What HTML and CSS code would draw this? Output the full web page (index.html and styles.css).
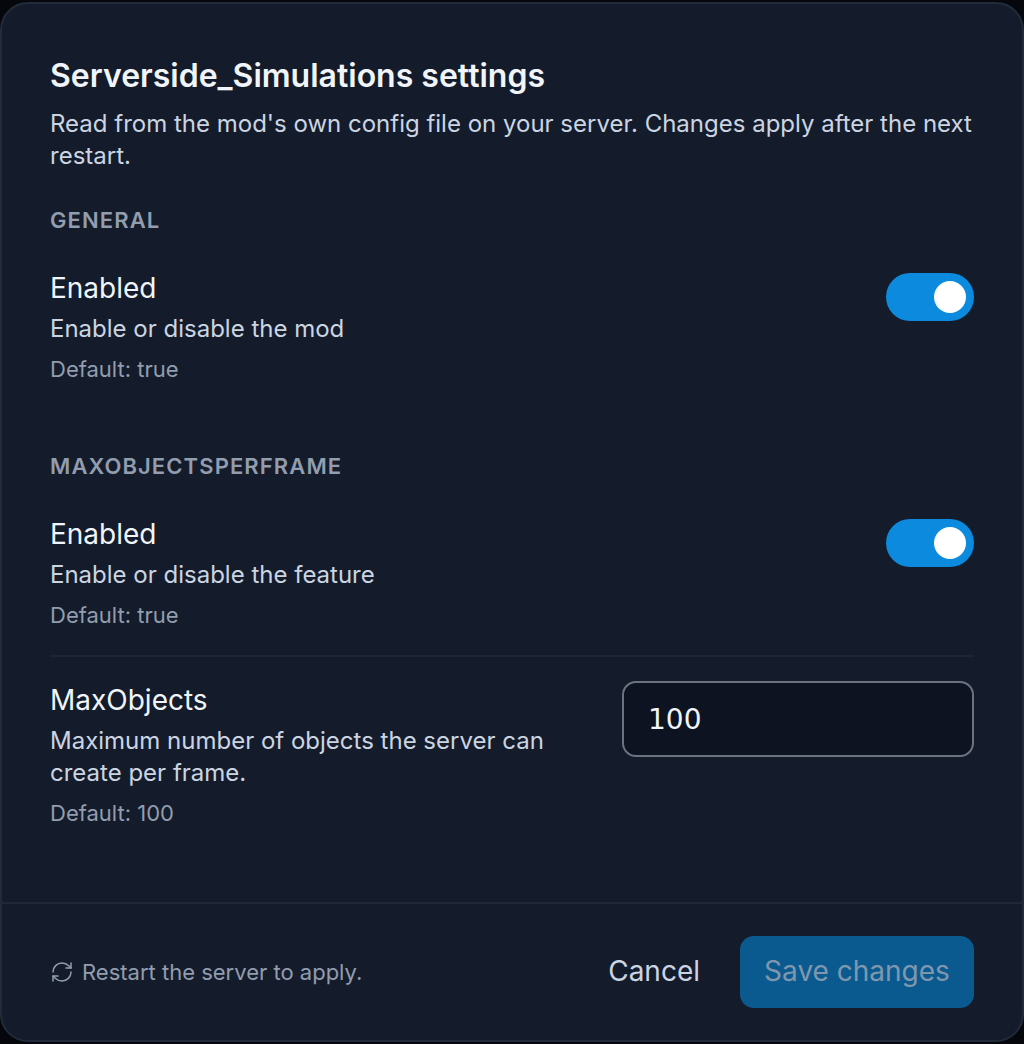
FILE: index.html
```html
<!DOCTYPE html>
<html lang="en">
<head>
    <meta charset="UTF-8">
    <meta name="viewport" content="width=device-width, initial-scale=1.0">
    <title>Serverside_Simulations settings</title>
    <link rel="stylesheet" href="styles.css">
</head>
<body>
    <div class="dialog">
        <div class="dialog-body">
            <h1>Serverside_Simulations settings</h1>
            <p class="intro">Read from the mod's own config file on your server. Changes apply after the next restart.</p>

            <section class="group">
                <h2>GENERAL</h2>
                <div class="setting">
                    <div class="setting-text">
                        <div class="setting-name">Enabled</div>
                        <div class="setting-desc">Enable or disable the mod</div>
                        <div class="setting-default">Default: true</div>
                    </div>
                    <div class="toggle"><span class="knob"></span></div>
                </div>
            </section>

            <section class="group">
                <h2>MAXOBJECTSPERFRAME</h2>
                <div class="setting">
                    <div class="setting-text">
                        <div class="setting-name">Enabled</div>
                        <div class="setting-desc">Enable or disable the feature</div>
                        <div class="setting-default">Default: true</div>
                    </div>
                    <div class="toggle"><span class="knob"></span></div>
                </div>
                <div class="setting setting-divided">
                    <div class="setting-text setting-text-narrow">
                        <div class="setting-name">MaxObjects</div>
                        <div class="setting-desc">Maximum number of objects the server can create per frame.</div>
                        <div class="setting-default">Default: 100</div>
                    </div>
                    <input class="number-input" type="text" value="100">
                </div>
            </section>
        </div>

        <div class="dialog-footer">
            <div class="restart-note">
                <svg class="restart-icon" viewBox="0 0 24 24" fill="none" stroke="currentColor" stroke-width="1.5" stroke-linecap="round" stroke-linejoin="round">
                    <path d="M3 12a9 9 0 0 1 9-9 9.75 9.75 0 0 1 6.74 2.74L21 8"/>
                    <path d="M21 3v5h-5"/>
                    <path d="M21 12a9 9 0 0 1-9 9 9.75 9.75 0 0 1-6.74-2.74L3 16"/>
                    <path d="M8 16H3v5"/>
                </svg>
                <span>Restart the server to apply.</span>
            </div>
            <div class="footer-actions">
                <button class="cancel-btn">Cancel</button>
                <button class="save-btn">Save changes</button>
            </div>
        </div>
    </div>
</body>
</html>
```

FILE: styles.css
```css
html, body {
    height: 100%;
}
body {
    margin: 0;
    padding: 2px 0;
    box-sizing: border-box;
    background-color: #05070c;
    font-family: Inter, "Liberation Sans", sans-serif;
}
.dialog {
    box-sizing: border-box;
    height: 1040px;
    display: flex;
    flex-direction: column;
    background-color: #141c2c;
    border: 2px solid #222b3a;
    border-radius: 28px;
}
.dialog-body {
    flex: 1;
    padding: 52px 48px 0;
}
h1 {
    margin: 0;
    font-size: 32px;
    line-height: 40px;
    font-weight: 600;
    color: #f1f5f9;
}
.intro {
    margin: 12px 0 0;
    font-size: 24px;
    line-height: 32px;
    color: #cbd5e1;
}
.group {
    margin-bottom: 67.5px;
}
h2 {
    margin: 34px 0 0;
    font-size: 22px;
    line-height: 28px;
    font-weight: 600;
    letter-spacing: 1.1px;
    color: #929dae;
}
.setting {
    display: flex;
    justify-content: space-between;
    align-items: flex-start;
    margin-top: 35px;
}
.setting-divided {
    margin-top: 24.5px;
    padding-top: 24px;
    border-top: 2px solid #1c2534;
}
.setting-text-narrow {
    width: 520px;
}
.setting-name {
    font-size: 28px;
    line-height: 38px;
    font-weight: 400;
    color: #f1f5f9;
}
.setting-desc {
    margin-top: 5.5px;
    font-size: 24px;
    line-height: 32px;
    color: #cbd5e1;
}
.setting-default {
    margin-top: 8px;
    font-size: 22px;
    line-height: 32px;
    color: #929dae;
}
.toggle {
    display: flex;
    justify-content: flex-end;
    align-items: center;
    width: 88px;
    height: 48px;
    margin-top: 4px;
    padding: 0 8px;
    box-sizing: border-box;
    background-color: #0c8ade;
    border-radius: 24px;
}
.knob {
    width: 32px;
    height: 32px;
    background-color: white;
    border-radius: 50%;
}
.number-input {
    box-sizing: border-box;
    width: 352px;
    height: 76px;
    padding: 0 24px;
    background-color: #0d1321;
    border: 2px solid #6b7380;
    border-radius: 14px;
    font-family: "DejaVu Sans", sans-serif;
    font-size: 28px;
    color: #f1f5f9;
}
.dialog-footer {
    display: flex;
    justify-content: space-between;
    align-items: center;
    height: 138px;
    box-sizing: border-box;
    padding: 0 48px;
    border-top: 2px solid #1f2838;
}
.restart-note {
    display: flex;
    align-items: center;
    gap: 8px;
    font-size: 22px;
    color: #929dae;
}
.restart-icon {
    width: 24px;
    height: 24px;
}
.footer-actions {
    display: flex;
    align-items: center;
    gap: 40px;
}
button {
    font-family: inherit;
    font-size: 28px;
    border: none;
    cursor: pointer;
}
.cancel-btn {
    padding: 0 0 2px;
    background: none;
    color: #cbd5e1;
}
.save-btn {
    width: 234px;
    height: 72px;
    padding: 0 0 2px;
    background-color: #0b5a8f;
    border-radius: 14px;
    color: #7f97ae;
}
```
